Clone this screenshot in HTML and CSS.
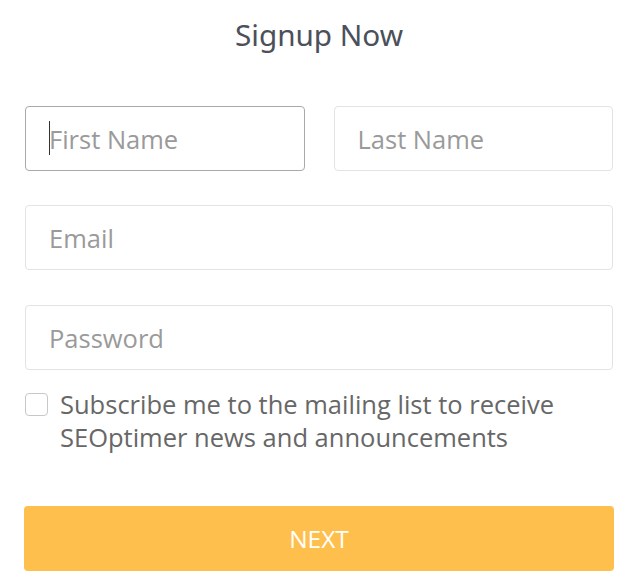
FILE: index.html
```html
<!DOCTYPE html>
<html>
<head>
<meta charset="utf-8">
<link rel="stylesheet" href="styles.css">
</head>
<body>
<div class="form">
  <h1 class="title">Signup Now</h1>
  <div class="row two">
    <div class="field">
      <input class="input focused" type="text" placeholder="First Name">
      <span class="caret"></span>
    </div>
    <div class="field">
      <input class="input" type="text" placeholder="Last Name">
    </div>
  </div>
  <div class="row row-mid">
    <input class="input" type="email" placeholder="Email">
  </div>
  <div class="row row-last">
    <input class="input" type="password" placeholder="Password">
  </div>
  <label class="check">
    <span class="box"></span>
    <span class="check-text">Subscribe me to the mailing list to receive SEOptimer news and announcements</span>
  </label>
  <button class="next" type="button">NEXT</button>
</div>
</body>
</html>
```
FILE: styles.css
```css
html, body {
  margin: 0;
  padding: 0;
  background: #ffffff;
}
body {
  font-family: "Open Sans", "Noto Sans", sans-serif;
  width: 625px;
}
.form {
  box-sizing: border-box;
  width: 625px;
  padding: 13px 12px 0 25px;
  display: flex;
  flex-direction: column;
}
.title {
  margin: 0 0 49px 0;
  text-align: center;
  font-family: "Noto Sans", "Open Sans", sans-serif;
  font-size: 29.7px;
  font-weight: 400;
  line-height: 44px;
  color: #4b505b;
}
.row {
  margin-bottom: 34px;
  display: flex;
}
.row-mid {
  margin-bottom: 35px;
}
.row-last {
  margin-bottom: 0;
}
.row.two {
  gap: 29px;
}
.field {
  position: relative;
  flex: 1;
  display: flex;
}
.input {
  box-sizing: border-box;
  flex: 1;
  width: 100%;
  height: 65px;
  border: 1px solid #e3e3e3;
  border-radius: 4px;
  padding: 0 0 0 23px;
  font-family: "Open Sans", "Noto Sans", sans-serif;
  font-size: 25.5px;
  color: #555;
  outline: none;
  background: #fff;
}
.input::placeholder {
  color: #9a9a9a;
}
.input.focused {
  border-color: #a9a9a9;
}
.caret {
  position: absolute;
  left: 24px;
  top: 15px;
  width: 1px;
  height: 34px;
  background: #333;
}
.check {
  display: flex;
  align-items: flex-start;
  gap: 12px;
  margin-top: 18px;
  margin-bottom: 52px;
}
.box {
  flex: none;
  box-sizing: border-box;
  width: 23px;
  height: 23px;
  margin-top: 5px;
  border: 1px solid #c8c8c8;
  border-radius: 4px;
  background: #fff;
}
.check-text {
  font-size: 25.5px;
  line-height: 33px;
  color: #676767;
  width: 540px;
}
.next {
  box-sizing: border-box;
  width: 590px;
  margin-left: -1px;
  height: 65px;
  border: none;
  border-radius: 4px;
  background: #ffbf4d;
  color: #ffffff;
  font-family: "Open Sans", "Noto Sans", sans-serif;
  font-size: 24.5px;
  text-align: center;
}
```
